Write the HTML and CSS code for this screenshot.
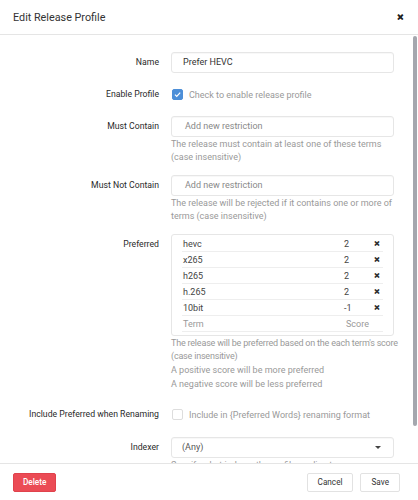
FILE: index.html
```html
<html>

<head>
	<title>Edit Release Profile</title>
	<link rel="stylesheet" href="styles.css">
</head>

<body>
	<div class="modal">
		<div class="modal-header">
			<span class="modal-title">Edit Release Profile</span>
			<span class="close">&#x2715;</span>
		</div>

		<div class="modal-body">
			<div class="form">
				<div class="row">
					<label>Name</label>
					<div class="control">
						<div class="input text">Prefer HEVC</div>
					</div>
				</div>

				<div class="row check-row">
					<label>Enable Profile</label>
					<div class="control inline">
						<span class="checkbox checked">
							<svg viewBox="0 0 12 12" width="11" height="11">
								<path d="M2.6 6.2 L5 8.5 L9.6 3.6" fill="none" stroke="#fff" stroke-width="1.6" />
							</svg>
						</span>
						<span class="hint">Check to enable release profile</span>
					</div>
				</div>

				<div class="row">
					<label>Must Contain</label>
					<div class="control">
						<div class="input placeholder">Add new restriction</div>
						<p class="help">The release must contain at least one of these terms (case insensitive)</p>
					</div>
				</div>

				<div class="row">
					<label>Must Not Contain</label>
					<div class="control">
						<div class="input placeholder">Add new restriction</div>
						<p class="help">The release will be rejected if it contains one or more of terms (case insensitive)</p>
					</div>
				</div>

				<div class="row">
					<label>Preferred</label>
					<div class="control">
						<div class="terms">
							<div class="term"><span class="name">hevc</span><span class="score">2</span><span class="remove">&#x2715;</span></div>
							<div class="term"><span class="name">x265</span><span class="score">2</span><span class="remove">&#x2715;</span></div>
							<div class="term"><span class="name">h265</span><span class="score">2</span><span class="remove">&#x2715;</span></div>
							<div class="term"><span class="name">h.265</span><span class="score">2</span><span class="remove">&#x2715;</span></div>
							<div class="term"><span class="name">10bit</span><span class="score">-1</span><span class="remove">&#x2715;</span></div>
							<div class="term new"><span class="name">Term</span><span class="score">Score</span><span class="remove"></span></div>
						</div>
						<p class="help tight">The release will be preferred based on the each term's score (case insensitive)</p>
						<p class="help">A positive score will be more preferred</p>
						<p class="help">A negative score will be less preferred</p>
					</div>
				</div>

				<div class="row check-row renaming">
					<label>Include Preferred when Renaming</label>
					<div class="control inline">
						<span class="checkbox"></span>
						<span class="hint">Include in {Preferred Words} renaming format</span>
					</div>
				</div>

				<div class="row">
					<label>Indexer</label>
					<div class="control">
						<div class="input select"><span>(Any)</span><span class="caret"></span></div>
						<p class="help">Specify what indexer the profile applies to</p>
					</div>
				</div>
			</div>

			<div class="scrollbar">
				<div class="thumb"></div>
			</div>
		</div>

		<div class="modal-footer">
			<button class="btn danger">Delete</button>
			<span class="spacer"></span>
			<button class="btn">Cancel</button>
			<button class="btn">Save</button>
		</div>
	</div>
</body>

</html>
```

FILE: styles.css
```css
* {
	box-sizing: border-box;
}

body {
	margin: 0;
	font-family: Roboto, "Liberation Sans", sans-serif;
	font-size: 9px;
	color: #333;
	background: #fff;
}

.modal {
	width: 418px;
	height: 500px;
	display: flex;
	flex-direction: column;
}

.modal-header {
	height: 35px;
	flex-shrink: 0;
	display: flex;
	align-items: center;
	padding: 0 13px;
	border-bottom: 1px solid #e5e5e5;
}

.modal-title {
	flex: 1;
	font-size: 10.8px;
	color: #333;
}

.close {
	font-size: 8px;
	font-weight: bold;
	color: #222;
	-webkit-text-stroke: 0.6px #222;
	margin-right: 1px;
}

.modal-body {
	flex: 1;
	display: flex;
	overflow: hidden;
}

.form {
	flex: 1;
	padding-top: 17px;
	overflow: hidden;
}

.scrollbar {
	width: 6px;
	padding: 1px 1px 0 1px;
	background: #fff;
}

.thumb {
	height: 390px;
	background: #a5a7ae;
	border-radius: 2px;
}

.row {
	display: flex;
	margin-bottom: 11px;
}

.row > label {
	width: 171px;
	flex-shrink: 0;
	text-align: right;
	padding-right: 12px;
	line-height: 21px;
	font-size: 8.7px;
	color: #2a2a2a;
}

.control {
	width: 223px;
}

.control.inline {
	display: flex;
	align-items: center;
	height: 21px;
}

.input {
	height: 21px;
	border: 1px solid #e6e6e6;
	border-radius: 3px;
	padding: 0 11px;
	line-height: 19px;
	box-shadow: inset 0 1px 1px rgba(0, 0, 0, 0.03);
}

.input.text {
	color: #333;
}

.input.placeholder {
	color: #888;
	padding-left: 13px;
}

.input.select {
	display: flex;
	justify-content: space-between;
	align-items: center;
	padding: 0 12px 0 10px;
	color: #555;
}

.caret {
	width: 0;
	height: 0;
	border-left: 3px solid transparent;
	border-right: 3px solid transparent;
	border-top: 3px solid #444;
}

.check-row.renaming {
	margin-top: 13px;
	margin-bottom: 12px;
}

.checkbox {
	width: 11px;
	height: 11px;
	margin-left: 1px;
	border: 1px solid #ddd;
	border-radius: 2px;
	display: inline-flex;
	align-items: center;
	justify-content: center;
}

.checkbox.checked {
	background: #4d8fd8;
	border-color: #4d8fd8;
}

.checkbox svg {
	display: block;
}

.hint {
	margin-left: 6px;
	color: #999;
}

.help {
	margin: 1px -6px 0 0;
	line-height: 13px;
	color: #999;
}

.help.tight {
	letter-spacing: -0.2px;
}

.terms {
	border: 1px solid #e6e6e6;
	border-radius: 3px;
	padding: 1px 10px 3px 10px;
}

.term {
	display: flex;
	height: 16px;
	align-items: center;
	border-bottom: 1px solid #eee;
	padding-left: 1px;
}

.term .name {
	flex: 1;
	color: #444;
}

.term .score {
	width: 30px;
	color: #444;
}

.term .remove {
	width: 9px;
	font-size: 6.5px;
	font-weight: bold;
	color: #333;
	-webkit-text-stroke: 0.4px #333;
}

.term.new .name,
.term.new .score {
	color: #999;
}

.term.new .score {
	width: 37px;
}

.term.new .remove {
	width: 0;
}

.modal-footer {
	height: 37px;
	flex-shrink: 0;
	border-top: 1px solid #e5e5e5;
	display: flex;
	align-items: center;
	padding: 0 18px 0 13px;
	gap: 7px;
}

.spacer {
	flex: 1;
}

.btn {
	font: inherit;
	font-size: 8.2px;
	height: 19px;
	padding: 0 10px;
	border: 1px solid #e2e2e2;
	border-radius: 2px;
	background: #fff;
	color: #333;
	white-space: nowrap;
}

.btn.danger {
	background: #eb4b55;
	border-color: #e0424c;
	color: #fff;
	font-weight: 500;
	padding: 0 9px;
}
```
